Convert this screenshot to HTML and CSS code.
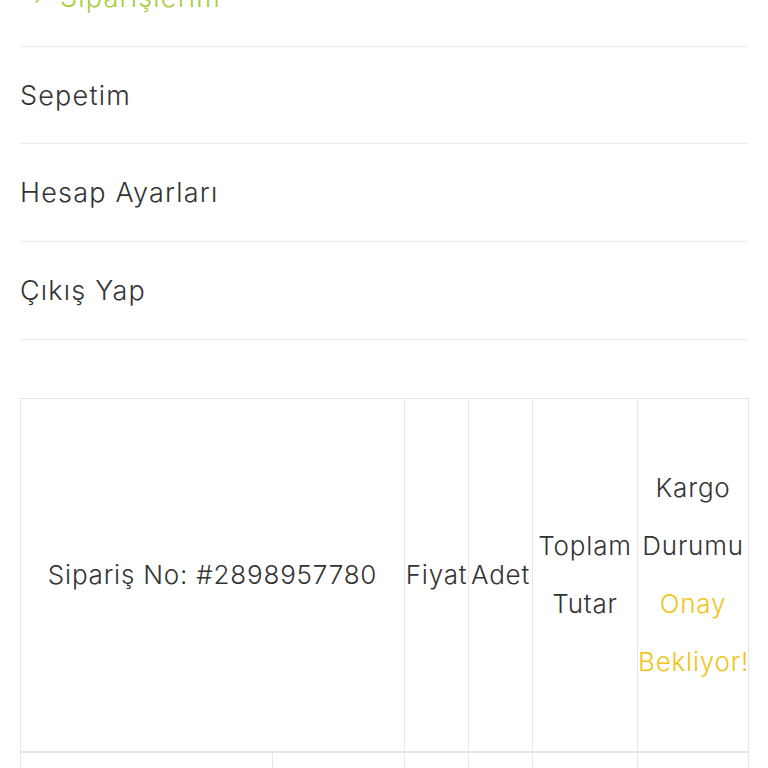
FILE: index.html
```html
<!DOCTYPE html>
<html lang="tr">
<head>
    <meta charset="UTF-8">
    <meta name="viewport" content="width=device-width, initial-scale=1.0">
    <title>Hesabım - Siparişlerim</title>
    <link rel="stylesheet" href="styles.css">
</head>
<body>
    <div class="account">
        <ul class="account-menu">
            <li class="active">
                <a href="#"><svg class="arrow" viewBox="0 0 26 16" width="26" height="16"><path d="M2 8h20M16 3l6 5-6 5" fill="none" stroke="currentColor" stroke-width="1.6" stroke-linecap="round" stroke-linejoin="round"/></svg>Siparişlerim</a>
            </li>
            <li><a href="#">Sepetim</a></li>
            <li><a href="#">Hesap Ayarları</a></li>
            <li><a href="#">Çıkış Yap</a></li>
        </ul>

        <table class="orders">
            <colgroup>
                <col style="width: 252px">
                <col style="width: 132px">
                <col style="width: 64px">
                <col style="width: 64px">
                <col style="width: 105px">
                <col style="width: 111px">
            </colgroup>
            <thead>
                <tr>
                    <th colspan="2">Sipariş No: #2898957780</th>
                    <th>Fiyat</th>
                    <th>Adet</th>
                    <th>Toplam Tutar</th>
                    <th>Kargo Durumu <span class="status">Onay Bekliyor!</span></th>
                </tr>
            </thead>
            <tbody>
                <tr>
                    <td>Ürün</td>
                    <td>Beden</td>
                    <td>₺349</td>
                    <td>1</td>
                    <td>₺349</td>
                    <td>-</td>
                </tr>
            </tbody>
        </table>
    </div>
</body>
</html>
```
FILE: styles.css
```css
body {
    margin: 0;
    font-family: Inter, "Noto Sans", sans-serif;
    font-weight: 300;
    color: #333;
    background: #fff;
}
.account {
    padding: 0 20px 40px;
}
.account-menu {
    list-style: none;
    margin: -51px 0 0;
    padding: 0;
}
.account-menu li {
    border-bottom: 1px solid #ececec;
}
.account-menu a {
    display: flex;
    align-items: center;
    height: 96.7px;
    font-size: 27px;
    letter-spacing: 1.2px;
    color: #333;
    text-decoration: none;
}
.account-menu li.active a {
    color: #a4cf3a;
}
.arrow {
    margin-right: 14px;
}
.orders {
    width: 100%;
    margin-top: 58px;
    border-collapse: collapse;
    table-layout: fixed;
    font-size: 26px;
    letter-spacing: 0.8px;
    line-height: 58px;
    text-align: center;
}
.orders th,
.orders td {
    border: 1px solid #e6e6e6;
    padding: 0;
    font-weight: 300;
    vertical-align: middle;
}
.orders th {
    padding: 60px 0;
    border-bottom-width: 2px;
}
.orders td {
    padding: 70px 0 30px;
}
.status {
    color: #f0c419;
}
```
